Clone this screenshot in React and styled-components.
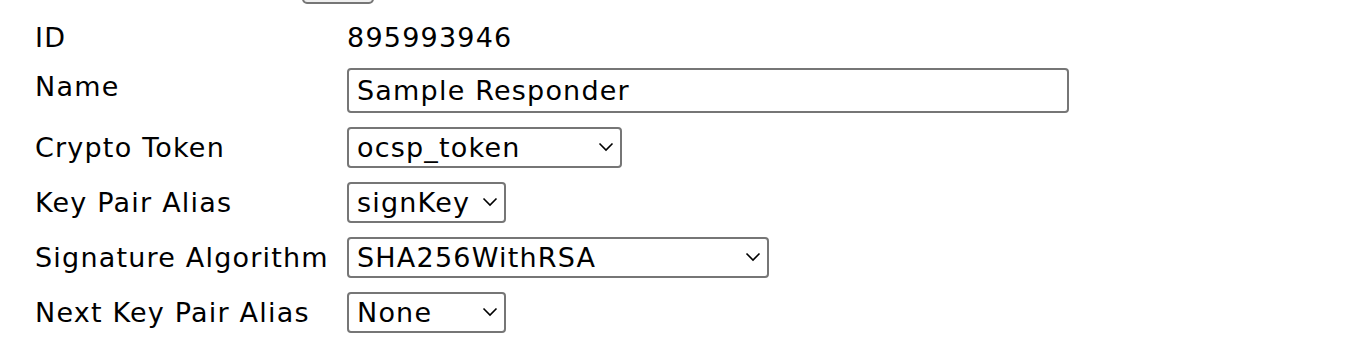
import React from 'react'
import styled, { createGlobalStyle } from 'styled-components'

const Global = createGlobalStyle`
  body {
    margin: 0;
    background: #fff;
    font-family: "DejaVu Sans", Verdana, sans-serif;
    color: #000;
  }
`

const Page = styled.div`
  height: 350px;
  overflow: hidden;
`

const TopBar = styled.div`
  display: flex;
  padding-left: 302px;
  margin-top: -36px;
`

const TopButton = styled.button`
  width: 72px;
  height: 40px;
  border: 2px solid #767676;
  border-radius: 5px;
  background: #efefef;
`

const Form = styled.div`
  display: grid;
  grid-template-columns: 312px auto;
  align-items: center;
  row-gap: 14px;
  padding: 18px 0 0 35px;
  font-size: 27px;
  letter-spacing: 1.2px;
`

const Label = styled.div`
  line-height: 32px;
  white-space: nowrap;
  margin-top: ${p => p.$shift || 0}px;
`

const Value = styled.div`
  display: flex;
  line-height: 32px;
`

const TextInput = styled.input`
  box-sizing: border-box;
  width: 722px;
  height: 45px;
  border: 2px solid #767676;
  border-radius: 4px;
  padding: 0 8px;
  font: inherit;
  letter-spacing: 1.2px;
  color: #000;
  outline: none;
`

const SelectWrap = styled.div`
  position: relative;
  width: ${p => p.$w}px;
`

const Select = styled.select`
  appearance: none;
  box-sizing: border-box;
  width: 100%;
  height: 41px;
  border: 2px solid #767676;
  border-radius: 4px;
  padding: 0 8px;
  background: #fff;
  font: inherit;
  letter-spacing: 1.2px;
  color: #000;
`

const Chevron = styled.svg`
  position: absolute;
  right: 8px;
  top: 15px;
  pointer-events: none;
`

const Dropdown = ({ w, value }) => (
  <SelectWrap $w={w}>
    <Select defaultValue={value}>
      <option>{value}</option>
    </Select>
    <Chevron width="16" height="10" viewBox="0 0 16 10">
      <path d="M1.5 1.5 L8 8 L14.5 1.5" fill="none" stroke="#000" strokeWidth="1.6" />
    </Chevron>
  </SelectWrap>
)

export default function App() {
  return (
    <Page>
      <Global />
      <TopBar>
        <TopButton />
      </TopBar>
      <Form>
        <Label>ID</Label>
        <Value>895993946</Value>

        <Label $shift={-8}>Name</Label>
        <Value>
          <TextInput defaultValue="Sample Responder" />
        </Value>

        <Label>Crypto Token</Label>
        <Value>
          <Dropdown w={275} value="ocsp_token" />
        </Value>

        <Label>Key Pair Alias</Label>
        <Value>
          <Dropdown w={159} value="signKey" />
        </Value>

        <Label>Signature Algorithm</Label>
        <Value>
          <Dropdown w={422} value="SHA256WithRSA" />
        </Value>

        <Label>Next Key Pair Alias</Label>
        <Value>
          <Dropdown w={159} value="None" />
        </Value>
      </Form>
    </Page>
  )
}
